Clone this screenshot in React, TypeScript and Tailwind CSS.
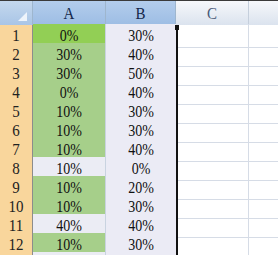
import React from "react";

const data: [string, string][] = [
  ["0%", "30%"],
  ["30%", "40%"],
  ["30%", "50%"],
  ["0%", "40%"],
  ["10%", "30%"],
  ["10%", "30%"],
  ["10%", "40%"],
  ["10%", "0%"],
  ["10%", "20%"],
  ["10%", "30%"],
  ["40%", "40%"],
  ["10%", "30%"],
];

const font = { fontFamily: '"Liberation Serif", "Noto Sans CJK SC", serif' };

export default function App() {
  return (
    <div className="w-[278px] h-[255px] overflow-hidden bg-white relative" style={font}>
      <div className="h-px bg-[#3a3a3a]" />
      {/* header row */}
      <div className="grid grid-cols-[33px_73px_70px_73px_1fr] h-[23px] border-b border-[#9eb6ce]">
        <div className="relative bg-gradient-to-b from-[#c4d8ee] to-[#a9c5e6] border-r border-[#9eb6ce]">
          <div className="absolute right-[5px] bottom-[4px] w-0 h-0 border-l-[9px] border-l-transparent border-b-[9px] border-b-[#eef4fb]" />
        </div>
        <div className="bg-gradient-to-b from-[#b3cdec] to-[#9dbde4] border-r border-[#9eb6ce] flex items-center justify-center text-[15px] text-[#15284b] pt-px">
          <span className="scale-y-115">A</span>
        </div>
        <div className="bg-gradient-to-b from-[#b3cdec] to-[#9dbde4] border-r border-[#9eb6ce] flex items-center justify-center text-[15px] text-[#15284b] pt-px">
          <span className="scale-y-115">B</span>
        </div>
        <div className="bg-gradient-to-b from-[#f6f8fb] to-[#dbe3ee] border-r border-[#c5cfdc] flex items-center justify-center text-[15px] text-[#4a5a78] pt-px">
          <span className="scale-y-115">C</span>
        </div>
        <div className="bg-gradient-to-b from-[#f6f8fb] to-[#dbe3ee]" />
      </div>
      {data.map(([a, b], i) => {
        const aBg =
          i === 0 ? "bg-[#92cf55]" : i === 7 || i === 10 ? "bg-[#ebecf4]" : "bg-[#a6cf8a]";
        return (
          <div key={i} className="grid grid-cols-[33px_73px_70px_73px_1fr] h-[19px]">
            <div className="bg-[#f9d69c] border-r border-[#8c8c8c] border-b border-b-[#e0c08c] flex items-center justify-center text-[15px] text-[#222]">
              <span className="scale-y-115">{i + 1}</span>
            </div>
            <div className={`${aBg} border-r border-b border-[#c9d3e0] flex items-center justify-center text-[14px] text-[#111]`}>
              <span className="scale-y-115">{a}</span>
            </div>
            <div className="bg-[#ebebf5] border-b border-[#d0d6e4] flex items-center justify-center text-[14px] text-[#111]">
              <span className="scale-y-115">{b}</span>
            </div>
            <div className="border-r border-b border-[#d6dce6]" />
            <div className="border-b border-[#d6dce6]" />
          </div>
        );
      })}
      <div className="grid grid-cols-[33px_73px_70px_73px_1fr] h-[19px]">
        <div className="bg-[#f9d69c] border-r border-[#8c8c8c]" />
        <div className="bg-[#ebecf4] border-r border-[#c9d3e0]" />
        <div className="bg-[#ebebf5]" />
        <div className="border-r border-[#d6dce6]" />
        <div />
      </div>
      {/* selection border */}
      <div className="absolute left-[175px] top-[25px] w-[4px] h-[5px] bg-[#111]" />
      <div className="absolute left-[176px] top-[30px] w-[2px] h-[230px] bg-[#111]" />
    </div>
  );
}
